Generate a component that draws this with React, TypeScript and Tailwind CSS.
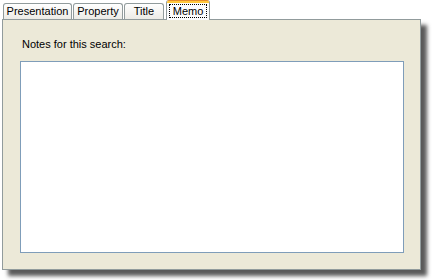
import React from 'react';

const tabs = ['Presentation', 'Property', 'Title', 'Memo'];
const widths: Record<string, string> = {
  Presentation: 'w-[69px]',
  Property: 'w-[50px]',
  Title: 'w-[40px]',
  Memo: 'w-[44px]',
};

const App: React.FC = () => {
  return (
    <div className="w-[432px] h-[280px] bg-white font-['Liberation_Sans',Arial,sans-serif] text-[11px] text-black">
      <div className="relative z-10 flex items-end h-[20px] pl-[3px] gap-[1px]">
        {tabs.map((t) =>
          t === 'Memo' ? (
            <div
              key={t}
              className={`${widths[t]} ml-[1px] h-[20px] flex flex-col bg-[#fcfcfe] border-x border-[#919b9c] rounded-t-[3px] overflow-hidden`}
            >
              <div className="h-[1px] bg-[#e68b2c]" />
              <div className="h-[2px] bg-[#ffc73c]" />
              <div className="flex-1 flex items-center justify-center pb-[1px]">
                <span className="px-[3px] leading-[12px] border border-dotted border-black">Memo</span>
              </div>
            </div>
          ) : (
            <div
              key={t}
              className={`${widths[t]} h-[16px] mb-[1px] flex items-center justify-center border-x border-t border-[#919b9c] rounded-t-[3px] bg-gradient-to-b from-white to-[#ecebe6] leading-none`}
            >
              {t}
            </div>
          )
        )}
      </div>
      <div className="-mt-px ml-[2px] w-[419px] h-[251px] border border-[#919b9c] bg-[#ece9d8] shadow-[6px_6px_4px_rgba(0,0,0,0.65)] pl-[17px] pt-[18px]">
        <div className="ml-[2px] leading-[13px]">Notes for this search:</div>
        <div className="mt-[10px] w-[384px] h-[192px] border border-[#7f9db9] bg-white" />
      </div>
    </div>
  );
};

export default App;
